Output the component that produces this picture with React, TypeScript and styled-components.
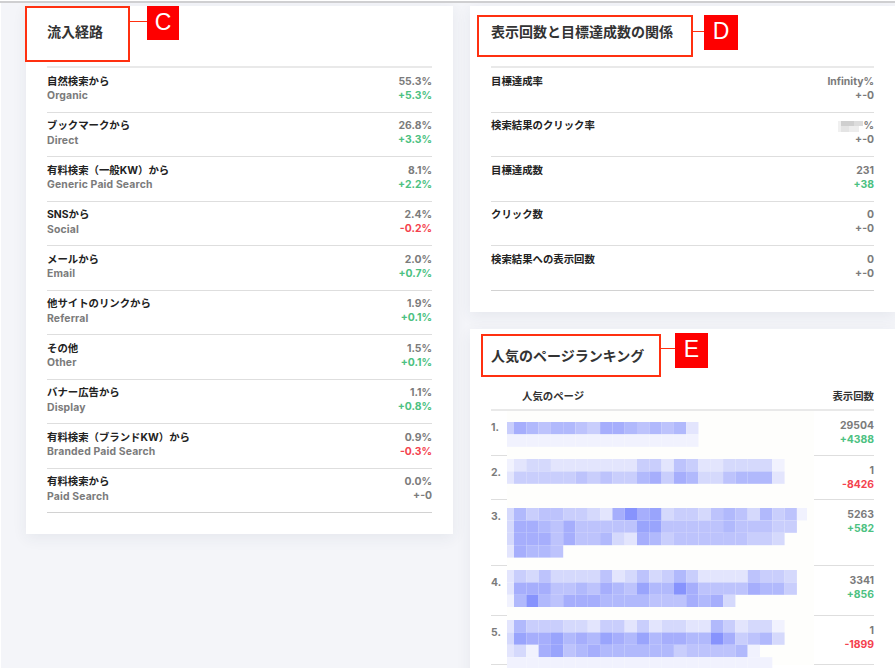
import React from 'react'
import styled, { createGlobalStyle } from 'styled-components'

const GlobalStyle = createGlobalStyle`
  html, body {
    margin: 0;
    height: 100%;
    overflow: hidden;
    background: #fff;
  }
  body {
    font-family: Inter, "Noto Sans CJK JP", sans-serif;
  }
  * {
    box-sizing: border-box;
  }
`

type Tone = 'up' | 'down' | 'flat'

const toneColors: Record<Tone, string> = {
  up: '#4cc181',
  down: '#f4424e',
  flat: '#7b7b7b',
}

const toneOf = (delta: string): Tone => {
  if (delta.startsWith('+-')) return 'flat'
  return delta.startsWith('+') ? 'up' : 'down'
}

const sources = [
  { ja: '自然検索から', en: 'Organic', value: '55.3%', delta: '+5.3%' },
  { ja: 'ブックマークから', en: 'Direct', value: '26.8%', delta: '+3.3%' },
  { ja: '有料検索（一般KW）から', en: 'Generic Paid Search', value: '8.1%', delta: '+2.2%' },
  { ja: 'SNSから', en: 'Social', value: '2.4%', delta: '-0.2%' },
  { ja: 'メールから', en: 'Email', value: '2.0%', delta: '+0.7%' },
  { ja: '他サイトのリンクから', en: 'Referral', value: '1.9%', delta: '+0.1%' },
  { ja: 'その他', en: 'Other', value: '1.5%', delta: '+0.1%' },
  { ja: 'バナー広告から', en: 'Display', value: '1.1%', delta: '+0.8%' },
  { ja: '有料検索（ブランドKW）から', en: 'Branded Paid Search', value: '0.9%', delta: '-0.3%' },
  { ja: '有料検索から', en: 'Paid Search', value: '0.0%', delta: '+-0' },
]

const goals = [
  { ja: '目標達成率', value: 'Infinity%', delta: '+-0' },
  { ja: '検索結果のクリック率', value: '', delta: '+-0' },
  { ja: '目標達成数', value: '231', delta: '+38' },
  { ja: 'クリック数', value: '0', delta: '+-0' },
  { ja: '検索結果への表示回数', value: '0', delta: '+-0' },
]

// each digit is one mosaic cell of the blurred page title, 0 = nothing
const pages = [
  {
    height: 45,
    top: 10,
    value: '29504',
    delta: '+4388',
    lines: ['4765665477656562', '1111111111111111'],
  },
  {
    height: 44,
    top: 2,
    value: '1',
    delta: '-8426',
    lines: ['12332222222442542233331', '24444454544674763356662'],
  },
  {
    height: 66,
    top: 7,
    value: '5263',
    delta: '+582',
    lines: [
      '3645544327978344356536451',
      '377657555558855555655544',
      '37775755632764555555443',
      '27665',
    ],
  },
  {
    height: 50,
    top: 3,
    value: '3341',
    delta: '+856',
    lines: [
      '243533335235346422225443',
      '277755657658669755557664',
      '1696577766665557673',
    ],
  },
  {
    height: 49,
    top: 3,
    value: '1',
    delta: '-1899',
    lines: [
      '26444332442423322642331',
      '38778676876867766974563',
      '231785676666664555561',
      '1111111111111111111111',
    ],
  },
]

const cellColors = [
  'transparent',
  '#f1f2fe',
  '#e3e5fd',
  '#d5d9fc',
  '#c9cefc',
  '#bdc3fc',
  '#b1b9fc',
  '#a6aefc',
  '#99a4fc',
  '#8793fd',
]

const CELL_W = 12.3
const CELL_H = 12.4
const FIRST_W = 7

const Mosaic: React.FC<{ lines: string[] }> = ({ lines }) => (
  <svg width="300" height={lines.length * CELL_H} aria-hidden>
    {lines.map((line, y) =>
      line.split('').map((digit, x) => (
        <rect
          key={`${x}-${y}`}
          x={x === 0 ? 0 : FIRST_W + (x - 1) * CELL_W}
          y={y * CELL_H}
          width={x === 0 ? FIRST_W : CELL_W}
          height={CELL_H}
          fill={cellColors[Number(digit)]}
        />
      )),
    )}
  </svg>
)

const BlurredNumber = () => (
  <svg width="26" height="11" aria-hidden>
    <rect x="4" y="0" width="13" height="5" fill="#cfcfcf" />
    <rect x="17" y="0" width="9" height="5" fill="#dcdcdc" />
    <rect x="1" y="0" width="3" height="11" fill="#f0f0f0" />
    <rect x="4" y="5" width="8" height="6" fill="#e4e4e4" />
    <rect x="12" y="5" width="10" height="6" fill="#ededed" />
  </svg>
)

export default function App() {
  return (
    <>
      <GlobalStyle />
      <TopLine />
      <Page>
        <Card>
          <Callout $x={-1} $y={0} $w={105} $h={56} $gap={17} $lineY={13}>
            <CalloutLetter $w={32} $h={34} $top={-2}>C</CalloutLetter>
          </Callout>
          <CardTitle>流入経路</CardTitle>
          <List>
            {sources.map(row => (
              <MetricRow key={row.en}>
                <div>
                  <Label>{row.ja}</Label>
                  <SubLabel>{row.en}</SubLabel>
                </div>
                <Numbers>
                  <Value>{row.value}</Value>
                  <Delta $tone={toneOf(row.delta)}>{row.delta}</Delta>
                </Numbers>
              </MetricRow>
            ))}
          </List>
        </Card>

        <RightColumn>
          <Card>
            <Callout $x={7} $y={9} $w={216} $h={42} $gap={11} $lineY={14}>
              <CalloutLetter $w={34} $h={35} $top={-2}>D</CalloutLetter>
            </Callout>
            <CardTitle>表示回数と目標達成数の関係</CardTitle>
            <List>
              {goals.map(row => (
                <MetricRow key={row.ja}>
                  <Label>{row.ja}</Label>
                  <Numbers>
                    <Value>
                      {row.value || (
                        <>
                          <BlurredNumber />%
                        </>
                      )}
                    </Value>
                    <Delta $tone={toneOf(row.delta)}>{row.delta}</Delta>
                  </Numbers>
                </MetricRow>
              ))}
            </List>
          </Card>

          <Card>
            <Callout $x={11} $y={5} $w={180} $h={43} $gap={14} $lineY={12}>
              <CalloutLetter $w={33} $h={35} $top={-3}>E</CalloutLetter>
            </Callout>
            <RankingTitle>人気のページランキング</RankingTitle>
            <TableHead>
              <span>人気のページ</span>
              <span>表示回数</span>
            </TableHead>
            {pages.map((page, i) => (
              <PageRow key={i} $h={page.height}>
                <Rank>{i + 1}.</Rank>
                <MosaicCell $top={page.top + 1}>
                  <Mosaic lines={page.lines} />
                </MosaicCell>
                <PageNumbers>
                  <Value>{page.value}</Value>
                  <Delta $tone={toneOf(page.delta)}>{page.delta}</Delta>
                </PageNumbers>
              </PageRow>
            ))}
          </Card>
        </RightColumn>
      </Page>
    </>
  )
}

const TopLine = styled.div`
  height: 3px;
  border-top: 1px solid #fff;
  border-bottom: 2px solid #cfcfd1;
`

const Page = styled.div`
  display: grid;
  grid-template-columns: 427px 425px;
  align-items: start;
  column-gap: 17px;
  width: 894px;
  height: 665px;
  margin-left: 1px;
  padding: 3px 0 0 25px;
  background: #f4f5f9;
  overflow: hidden;
`

const RightColumn = styled.div`
  display: flex;
  flex-direction: column;
  gap: 17.5px;
`

const Card = styled.section`
  position: relative;
  padding: 0 21px 21px;
  background: #fff;
  box-shadow: 0 4px 14px rgba(40, 50, 80, 0.07);
`

const CardTitle = styled.h2`
  height: 60px;
  margin: 0;
  padding-top: 16px;
  font-size: 14px;
  line-height: 20px;
  font-weight: 700;
  color: #333;
`

const RankingTitle = styled(CardTitle)`
  height: 61px;
  padding-top: 17px;
`

const List = styled.div`
  border-top: 2px solid #e9e9e9;
`

const MetricRow = styled.div`
  display: flex;
  justify-content: space-between;
  height: 44.5px;
  padding-top: 6.6px;
  border-bottom: 1px solid #dedede;
  font-size: 10.4px;
  line-height: 14.4px;
  font-weight: 700;

  &:last-child {
    border-bottom-color: #d2d2d2;
  }
`

const Label = styled.div`
  color: #222;
`

const SubLabel = styled.div`
  color: #7b7b7b;
  letter-spacing: 0.16px;
`

const Numbers = styled.div`
  text-align: right;
`

const Value = styled.div`
  display: flex;
  justify-content: flex-end;
  align-items: center;
  height: 14.4px;
  color: #7b7b7b;
`

const Delta = styled.div<{ $tone: Tone }>`
  color: ${p => toneColors[p.$tone]};
`

const TableHead = styled.div`
  display: flex;
  justify-content: space-between;
  height: 21px;
  padding-left: 31px;
  border-bottom: 2px solid #e9e9e9;
  font-size: 10.4px;
  line-height: 14.4px;
  font-weight: 700;
  color: #333;
`

const PageRow = styled.div<{ $h: number }>`
  display: flex;
  height: ${p => p.$h}px;
  border-bottom: 1px solid #dedede;
  font-size: 10.4px;
  line-height: 14.4px;
  font-weight: 700;
`

const Rank = styled.div`
  width: 16px;
  padding-top: 10px;
  color: #7b7b7b;
`

const MosaicCell = styled.div<{ $top: number }>`
  position: relative;
  width: 307px;
  margin-bottom: -1px;
  padding-top: ${p => p.$top}px;
  background: #fefefc;

  svg {
    display: block;
  }
`

const PageNumbers = styled(Numbers)`
  flex: 1;
  padding-top: 8px;
`

const Callout = styled.div<{
  $x: number
  $y: number
  $w: number
  $h: number
  $gap: number
  $lineY: number
}>`
  position: absolute;
  left: ${p => p.$x}px;
  top: ${p => p.$y}px;
  width: ${p => p.$w}px;
  height: ${p => p.$h}px;
  border: 2px solid #ff3010;
  display: flex;

  &::after {
    content: '';
    position: absolute;
    left: 100%;
    top: ${p => p.$lineY}px;
    width: ${p => p.$gap}px;
    height: 1px;
    margin-left: 2px;
    background: #ff3010;
  }

  > * {
    left: calc(100% + ${p => p.$gap + 2}px);
  }
`

const CalloutLetter = styled.div<{ $w: number; $h: number; $top: number }>`
  position: absolute;
  top: ${p => p.$top}px;
  width: ${p => p.$w}px;
  height: ${p => p.$h}px;
  background: #fe0000;
  color: #fff;
  font-family: "Liberation Sans", sans-serif;
  font-size: 23px;
  line-height: ${p => p.$h - 2}px;
  text-align: center;
`
